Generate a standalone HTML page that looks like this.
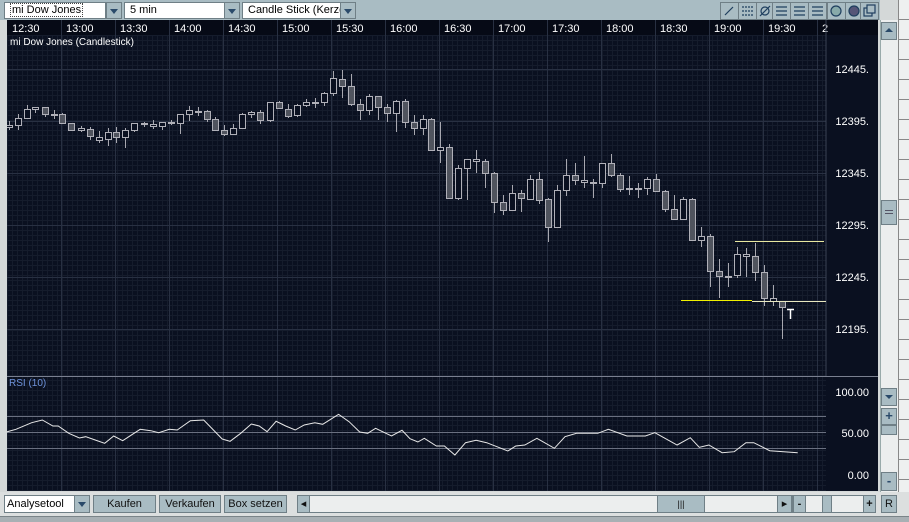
<!DOCTYPE html>
<html><head><meta charset="utf-8"><style>
*{margin:0;padding:0;box-sizing:border-box}
body{width:909px;height:522px;overflow:hidden;background:#d4d8d8;font-family:"Liberation Sans",sans-serif;position:relative}
.a{position:absolute}
.top{left:0;top:0;width:880px;height:20px;background:#a9bcc3}
.dd{background:#fff;border:1px solid #6f7f86;height:17px;top:2px;font-size:11px;line-height:15px;padding-left:5px;color:#000}
.ar{background:#a9bcc3;border:1px solid #6f7f86;height:17px;top:2px;width:16px}
.ar:after{content:"";position:absolute;left:3px;top:6px;border-left:4px solid transparent;border-right:4px solid transparent;border-top:5px solid #2a4a6a}
.ib{top:2px;height:18px;border:1px solid #6f7f86;background:#a9bcc3}
.btn{top:495px;height:18px;background:#a9bcc3;border:1px solid #6f7f86;font-size:11px;line-height:16px;text-align:center;color:#111}
</style></head><body>
<div class="a top"></div>
<div class="a dd" style="left:4px;width:102px"><span style="border:1px dotted #444;padding:0 1px">mi Dow Jones</span></div>
<div class="a ar" style="left:106px"></div>
<div class="a dd" style="left:124px;width:101px">5 min</div>
<div class="a ar" style="left:224px"></div>
<div class="a dd" style="left:242px;width:100px;overflow:hidden;white-space:nowrap">Candle Stick (Kerze</div>
<div class="a ar" style="left:340px"></div>
<svg class="a" style="left:720px;top:2px" width="160" height="19">
<g fill="#a9bcc3" stroke="#6f7f86"><rect x="0.5" y="0.5" width="18" height="17"/><rect x="18.5" y="0.5" width="18" height="17"/><rect x="36.5" y="0.5" width="18" height="17"/><rect x="52.5" y="0.5" width="18" height="17"/><rect x="70.5" y="0.5" width="18" height="17"/><rect x="88.5" y="0.5" width="18" height="17"/><rect x="107.5" y="0.5" width="18" height="17"/><rect x="125.5" y="0.5" width="18" height="17"/><rect x="140.5" y="0.5" width="18" height="17"/></g>
<g stroke="#1f3f5f" stroke-width="1.2" fill="none"><path d="M5 13L13 5"/><path d="M22 5h11M22 9h11M22 13h11" stroke-dasharray="2 1"/><circle cx="45" cy="9" r="4"/><path d="M40 14L50 4"/><path d="M56 5h11M56 9h11M56 13h11"/><path d="M74 5h11M74 9h11M74 13h11"/><path d="M92 5h11M92 9h11M92 13h11"/><circle cx="116" cy="9" r="5" fill="#8aa"/><circle cx="134" cy="9" r="5" fill="#557"/><rect x="144" y="6" width="8" height="8"/><rect x="147" y="3" width="8" height="8" fill="#a9bcc3"/></g>
</svg>
<div class="a" style="left:0;top:20px;width:7px;height:472px;background:#d4d8d8"></div>
<svg class="a" style="left:7px;top:20px" width="871" height="471" id="ch">
<defs><pattern id="p" width="5" height="5" patternUnits="userSpaceOnUse"><path d="M0 0.5h5M0.5 0v5" stroke="#151c2c" stroke-width="1"/></pattern></defs>
<rect width="871" height="471" fill="#0a1020"/>
<rect y="15" width="819" height="456" fill="url(#p)"/>
<rect width="871" height="15" fill="#060a16"/>
<g stroke="#283042" stroke-width="1" id="grid"></g>
<g fill="#fff" font-size="11" id="tl"></g>
<text x="3" y="25" fill="#fff" font-size="10">mi Dow Jones (Candlestick)</text>
<line x1="819" y1="0" x2="819" y2="356" stroke="#3a4254"/>
<line x1="0" y1="356.5" x2="871" y2="356.5" stroke="#7a8090"/>
<g fill="#fff" font-size="11" text-anchor="end">
<text x="862" y="53">12445.</text><text x="862" y="105">12395.</text><text x="862" y="157">12345.</text><text x="862" y="209">12295.</text><text x="862" y="261">12245.</text><text x="862" y="313">12195.</text>
<text x="862" y="376">100.00</text><text x="862" y="417">50.00</text><text x="862" y="459">0.00</text></g>
<g stroke="#6a7080"><line x1="0" y1="396.5" x2="819" y2="396.5"/><line x1="0" y1="412.5" x2="819" y2="412.5"/><line x1="0" y1="428.5" x2="819" y2="428.5"/></g>
<text x="2" y="366" fill="#6f94dc" font-size="10">RSI (10)</text>
<g id="cd"></g>
<line x1="728" y1="221.5" x2="817" y2="221.5" stroke="#e8e8a0"/>
<line x1="674" y1="280.5" x2="745" y2="280.5" stroke="#f0f000"/>
<line x1="745" y1="281.5" x2="819" y2="281.5" stroke="#e8e8c0"/>
<polyline id="rsi" fill="none" stroke="#e8e8e8" stroke-width="1"/>
</svg>
<div class="a" style="left:880px;top:20px;width:18px;height:472px;background:#eceeee;border-left:1px solid #9aa"></div>
<div class="a ib" style="left:881px;top:22px;width:16px;height:18px"></div>
<div class="a" style="left:885px;top:28px;border-left:4px solid transparent;border-right:4px solid transparent;border-bottom:4px solid #2a4a6a"></div>
<div class="a ib" style="left:881px;top:200px;width:16px;height:25px"><div style="margin:9px 3px;border-top:1px solid #556;border-bottom:1px solid #556;height:4px"></div></div>
<div class="a ib" style="left:881px;top:388px;width:16px;height:18px"></div>
<div class="a" style="left:885px;top:395px;border-left:4px solid transparent;border-right:4px solid transparent;border-top:4px solid #2a4a6a"></div>
<div class="a ib" style="left:881px;top:408px;width:16px;height:17px;font-size:13px;font-weight:bold;color:#2a4a6a;text-align:center;line-height:14px">+</div>
<div class="a ib" style="left:881px;top:425px;width:16px;height:10px"></div>
<div class="a ib" style="left:881px;top:472px;width:16px;height:19px;font-size:13px;font-weight:bold;color:#2a4a6a;text-align:center;line-height:16px">-</div>
<div class="a" style="left:898px;top:0;width:11px;height:492px;background:#eef0f0;border-left:1px solid #888;background-image:repeating-linear-gradient(#eef0f0 0 19px,#888 19px 20px)"></div>
<div class="a" style="left:0;top:492px;width:909px;height:24px;background:#dcdfdf"></div>
<div class="a" style="left:0;top:516px;width:909px;height:6px;background:#a8b0b4;border-top:1px solid #7a8488"></div>
<div class="a dd" style="left:4px;top:495px;width:71px;height:18px;padding-left:2px;line-height:16px">Analysetool</div>
<div class="a ar" style="left:74px;top:495px;height:18px"></div>
<div class="a btn" style="left:93px;width:63px">Kaufen</div>
<div class="a btn" style="left:159px;width:62px">Verkaufen</div>
<div class="a btn" style="left:224px;width:63px">Box setzen</div>
<div class="a" style="left:297px;top:495px;width:496px;height:18px;background:#eceeee;border:1px solid #6f7f86"></div>
<div class="a btn" style="left:297px;width:13px">&#9666;</div>
<div class="a btn" style="left:657px;width:48px;font-size:9px">|||</div>
<div class="a btn" style="left:777px;width:15px">&#9656;</div>
<div class="a" style="left:793px;top:495px;width:83px;height:18px;background:#eceeee;border:1px solid #6f7f86"></div>
<div class="a btn" style="left:793px;width:13px;font-weight:bold">-</div>
<div class="a btn" style="left:822px;width:10px"></div>
<div class="a btn" style="left:863px;width:13px;font-weight:bold">+</div>
<div class="a btn" style="left:881px;width:16px">R</div>
<script>
var NS="http://www.w3.org/2000/svg";
function el(p,t,a){var e=document.createElementNS(NS,t);for(var k in a)e.setAttribute(k,a[k]);p.appendChild(e);return e}
var g=document.getElementById('grid');
[49,101,153,205,257,309].forEach(function(y){el(g,'line',{x1:0,x2:819,y1:y+.5,y2:y+.5})});
var tl=document.getElementById('tl'),labs=["12:30","13:00","13:30","14:00","14:30","15:00","15:30","16:00","16:30","17:00","17:30","18:00","18:30","19:00","19:30","2"];
for(var i=0;i<16;i++){var x=7+54*i-2;if(i>0){el(g,'line',{x1:x-4.5,x2:x-4.5,y1:0,y2:471});}var t=el(tl,'text',{x:x,y:12});t.textContent=labs[i];}
// candles: x, top, bottom, filled, wickTop, wickBot (screen coords)
var C=[[9,125,127,0,121,130],[18,118,125,0,114,130],[27,109,118,0,105,118],[35,107,109,0,107,113],[45,107,114,1,107,117],[54,114,114,0,110,119],[62,114,123,1,113,123],[71,123,130,1,123,130],[81,128,130,0,126,132],[90,129,136,1,127,140],[99,137,140,0,131,143],[108,132,139,0,128,146],[116,132,137,1,127,143],[125,130,137,0,128,148],[134,123,130,0,123,132],[144,123,124,0,122,127],[153,124,126,0,120,129],[162,122,126,0,122,130],[171,122,123,0,120,125],[180,114,123,0,114,134],[189,110,114,0,106,121],[198,111,111,0,107,116],[207,111,119,1,110,122],[215,119,130,1,117,131],[224,130,134,1,125,136],[233,128,134,0,124,134],[242,114,128,0,113,128],[251,112,114,0,111,118],[260,112,120,1,110,124],[270,102,120,0,102,122],[279,102,108,1,101,109],[288,109,116,1,104,118],[297,105,115,0,104,117],[306,102,105,0,99,107],[315,102,102,0,98,108],[324,93,102,0,92,106],[333,78,93,0,71,96],[342,79,86,1,70,98],[351,86,104,1,74,106],[360,104,110,1,99,120],[369,96,110,0,94,115],[378,96,107,1,96,120],[387,107,113,1,104,122],[396,101,113,0,100,132],[405,101,122,1,99,128],[414,122,128,1,115,135],[423,119,128,0,115,135],[431,119,150,1,118,151],[440,147,150,0,122,163],[449,147,198,1,144,198],[458,168,198,0,165,200],[467,159,168,0,159,200],[476,159,161,0,150,173],[485,161,173,1,159,188],[494,173,202,1,172,213],[503,202,210,1,195,215],[512,193,210,0,185,210],[521,193,198,1,190,212],[530,179,199,0,175,200],[539,179,200,1,172,204],[548,199,227,1,198,242],[557,190,227,0,185,227],[566,175,190,0,159,196],[575,175,180,1,163,185],[584,180,182,0,156,188],[593,182,183,0,179,198],[602,163,183,0,163,188],[611,163,175,1,154,177],[620,175,189,1,173,192],[629,188,188,0,176,195],[638,188,188,0,183,198],[647,179,188,0,177,195],[656,179,191,1,174,192],[665,191,209,1,190,212],[674,209,219,1,195,219],[683,199,219,0,197,219],[692,199,240,1,198,240],[701,236,240,0,227,247],[710,236,271,1,234,287],[719,271,276,1,259,298],[728,276,276,0,263,287],[737,254,275,0,247,278],[746,254,256,0,248,277],[755,256,272,1,243,281],[764,272,298,1,265,306],[773,298,301,0,285,306],[782,301,307,1,301,339]];
var cd=document.getElementById('cd');
C.forEach(function(c){var x=c[0]-7,t=c[1]-20,b=c[2]-20;
el(cd,'line',{x1:x+.5,x2:x+.5,y1:c[4]-20,y2:c[5]-20,stroke:'#a8a8b0'});
var h=Math.max(b-t,1);el(cd,'rect',{x:x-2.5,y:t+.5,width:6,height:h,fill:c[3]?'#50545e':'#0a1020',stroke:'#b0b0b8'});});
el(cd,'path',{d:'M780 289.5h7M783.5 289v10',stroke:'#fff',fill:'none','stroke-width':1.5});
var R=[[12,186],[30,178],[60,158],[80,150],[100,168],[110,168],[130,190],[150,204],[162,200],[180,210],[198,220],[215,198],[232,212],[265,178],[285,182],[300,188],[320,178],[335,180],[360,152],[385,150],[420,207],[435,214],[455,190],[475,162],[490,168],[505,185],[522,154],[540,168],[558,180],[575,165],[595,158],[610,163],[640,133],[660,155],[680,186],[695,190],[710,175],[740,198],[760,181],[775,206],[790,216],[802,205],[825,228],[840,228],[860,255],[880,218],[900,211],[920,218],[960,243],[975,228],[992,225],[1015,205],[1048,235],[1068,200],[1090,190],[1130,190],[1150,178],[1185,198],[1220,198],[1238,188],[1280,225],[1305,203],[1322,232],[1340,225],[1365,248],[1388,245],[1410,218],[1425,218],[1455,242],[1508,248]];
document.getElementById('rsi').setAttribute('points',R.map(function(p){return (p[0]*0.529-7).toFixed(1)+','+(370+p[1]/3-20).toFixed(1)}).join(' '));
</script>
</body></html>
